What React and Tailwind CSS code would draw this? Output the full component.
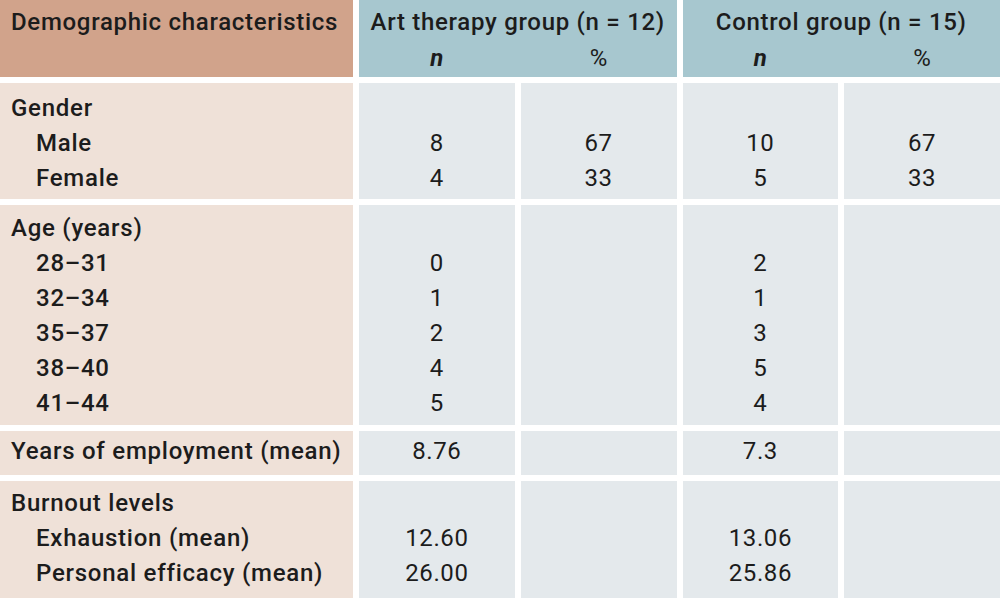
import React from "react";

const sections = [
  {
    box: "h-[116px] pt-[8px]",
    rows: [
      { label: "Gender", sub: false, v: ["", "", "", ""] },
      { label: "Male", sub: true, v: ["8", "67", "10", "67"] },
      { label: "Female", sub: true, v: ["4", "33", "5", "33"] },
    ],
  },
  {
    box: "h-[220px] pt-[6px]",
    rows: [
      { label: "Age (years)", sub: false, v: ["", "", "", ""] },
      { label: "28–31", sub: true, v: ["0", "", "2", ""] },
      { label: "32–34", sub: true, v: ["1", "", "1", ""] },
      { label: "35–37", sub: true, v: ["2", "", "3", ""] },
      { label: "38–40", sub: true, v: ["4", "", "5", ""] },
      { label: "41–44", sub: true, v: ["5", "", "4", ""] },
    ],
  },
  {
    box: "h-[44px] pt-[3px]",
    rows: [{ label: "Years of employment (mean)", sub: false, v: ["8.76", "", "7.3", ""] }],
  },
  {
    box: "h-[120px] pt-[5px]",
    rows: [
      { label: "Burnout levels", sub: false, v: ["", "", "", ""] },
      { label: "Exhaustion (mean)", sub: true, v: ["12.60", "", "13.06", ""] },
      { label: "Personal efficacy (mean)", sub: true, v: ["26.00", "", "25.86", ""] },
    ],
  },
];

export default function App() {
  return (
    <div
      className="w-[1000px] h-[598px] overflow-hidden bg-white text-[#1c1c1c] text-[24px]"
      style={{ fontFamily: "Roboto, 'Liberation Sans', sans-serif" }}
    >
      <div className="grid grid-cols-[353px_1fr_1fr_1fr_1fr] gap-[6px]">
        {/* Header */}
        <div className="h-[77px] bg-[#d1a38b] pl-[11px] pt-[4px] leading-[36px] font-medium tracking-[0.7px]">
          Demographic characteristics
        </div>
        <div className="col-span-2 h-[77px] bg-[#a7c7cf] pt-[4px] leading-[36px]">
          <div className="text-center font-medium tracking-[0.7px]">Art therapy group (n = 12)</div>
          <div className="grid grid-cols-2 gap-[6px]">
            <div className="text-center italic font-bold">n</div>
            <div className="text-center">%</div>
          </div>
        </div>
        <div className="col-span-2 h-[77px] bg-[#a7c7cf] pt-[4px] leading-[36px]">
          <div className="text-center font-medium tracking-[0.7px]">Control group (n = 15)</div>
          <div className="grid grid-cols-2 gap-[6px]">
            <div className="text-center italic font-bold">n</div>
            <div className="text-center">%</div>
          </div>
        </div>

        {/* Body */}
        {sections.map((s, si) => (
          <React.Fragment key={si}>
            <div className={`${s.box} bg-[#efe1d8] leading-[35px] font-medium tracking-[0.75px]`}>
              {s.rows.map((r, ri) => (
                <div key={ri} className={r.sub ? "pl-[36px]" : "pl-[11px]"}>
                  {r.label}
                </div>
              ))}
            </div>
            {[0, 1, 2, 3].map((c) => (
              <div key={c} className={`${s.box} bg-[#e4e9ec] leading-[35px] tracking-[0.6px]`}>
                {s.rows.map((r, ri) => (
                  <div key={ri} className="h-[35px] text-center">
                    {r.v[c]}
                  </div>
                ))}
              </div>
            ))}
          </React.Fragment>
        ))}
      </div>
    </div>
  );
}
